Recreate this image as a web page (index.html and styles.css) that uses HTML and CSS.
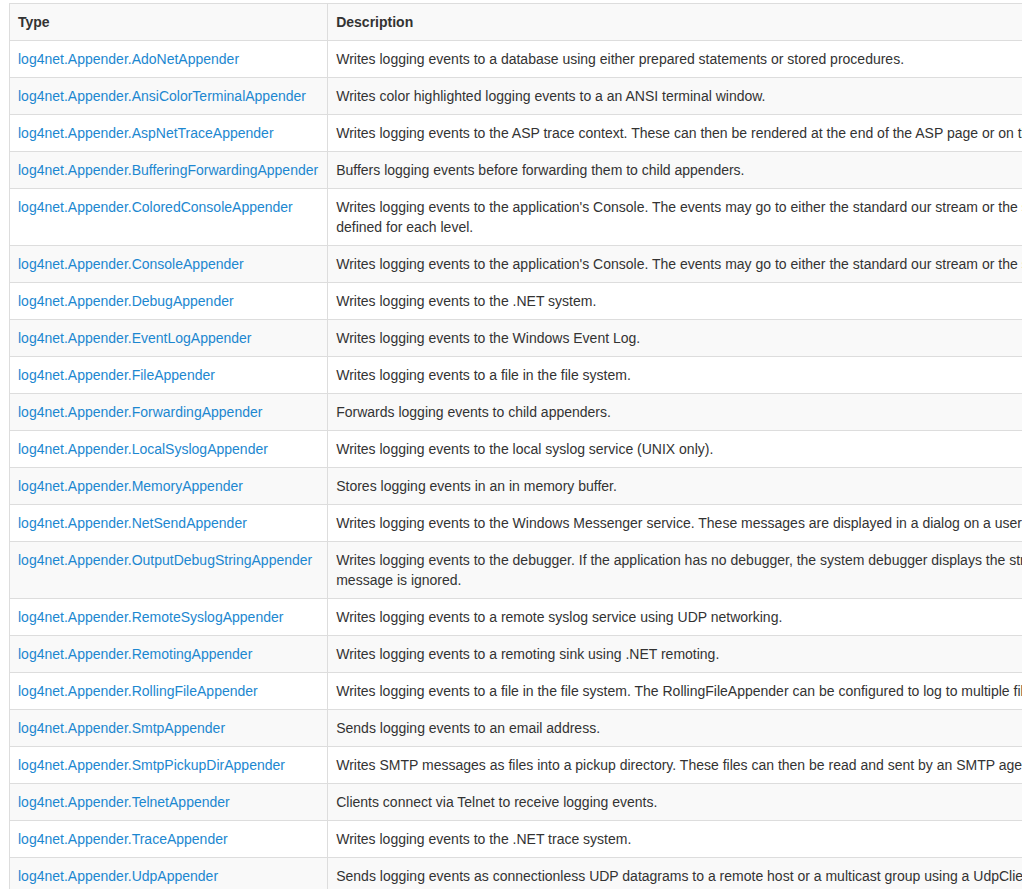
FILE: index.html
```html
<!DOCTYPE html>
<html lang="en">
<head>
<meta charset="UTF-8" />
<title>log4net Appenders</title>
<link rel="stylesheet" href="styles.css">
</head>
<body>

<div class="content">
  <table class="appenders">
    <tr>
      <th class="type">Type</th>
      <th class="desc">Description</th>
    </tr>
    <tr>
      <td class="type"><a href="#">log4net.Appender.AdoNetAppender</a></td>
      <td class="desc">Writes logging events to a database using either prepared statements or stored procedures.</td>
    </tr>
    <tr>
      <td class="type"><a href="#">log4net.Appender.AnsiColorTerminalAppender</a></td>
      <td class="desc">Writes color highlighted logging events to a an ANSI terminal window.</td>
    </tr>
    <tr>
      <td class="type"><a href="#">log4net.Appender.AspNetTraceAppender</a></td>
      <td class="desc">Writes logging events to the ASP trace context. These can then be rendered at the end of the ASP page or on the ASP trace page.</td>
    </tr>
    <tr>
      <td class="type"><a href="#">log4net.Appender.BufferingForwardingAppender</a></td>
      <td class="desc">Buffers logging events before forwarding them to child appenders.</td>
    </tr>
    <tr>
      <td class="type"><a href="#">log4net.Appender.ColoredConsoleAppender</a></td>
      <td class="desc">Writes logging events to the application's Console. The events may go to either the standard our stream or the standard error stream. The events may have configurable text and background colors defined for each level.</td>
    </tr>
    <tr>
      <td class="type"><a href="#">log4net.Appender.ConsoleAppender</a></td>
      <td class="desc">Writes logging events to the application's Console. The events may go to either the standard our stream or the standard error stream.</td>
    </tr>
    <tr>
      <td class="type"><a href="#">log4net.Appender.DebugAppender</a></td>
      <td class="desc">Writes logging events to the .NET system.</td>
    </tr>
    <tr>
      <td class="type"><a href="#">log4net.Appender.EventLogAppender</a></td>
      <td class="desc">Writes logging events to the Windows Event Log.</td>
    </tr>
    <tr>
      <td class="type"><a href="#">log4net.Appender.FileAppender</a></td>
      <td class="desc">Writes logging events to a file in the file system.</td>
    </tr>
    <tr>
      <td class="type"><a href="#">log4net.Appender.ForwardingAppender</a></td>
      <td class="desc">Forwards logging events to child appenders.</td>
    </tr>
    <tr>
      <td class="type"><a href="#">log4net.Appender.LocalSyslogAppender</a></td>
      <td class="desc">Writes logging events to the local syslog service (UNIX only).</td>
    </tr>
    <tr>
      <td class="type"><a href="#">log4net.Appender.MemoryAppender</a></td>
      <td class="desc">Stores logging events in an in memory buffer.</td>
    </tr>
    <tr>
      <td class="type"><a href="#">log4net.Appender.NetSendAppender</a></td>
      <td class="desc">Writes logging events to the Windows Messenger service. These messages are displayed in a dialog on a users terminal.</td>
    </tr>
    <tr>
      <td class="type"><a href="#">log4net.Appender.OutputDebugStringAppender</a></td>
      <td class="desc">Writes logging events to the debugger. If the application has no debugger, the system debugger displays the string. If the application has no debugger and the system debugger is not active, the message is ignored.</td>
    </tr>
    <tr>
      <td class="type"><a href="#">log4net.Appender.RemoteSyslogAppender</a></td>
      <td class="desc">Writes logging events to a remote syslog service using UDP networking.</td>
    </tr>
    <tr>
      <td class="type"><a href="#">log4net.Appender.RemotingAppender</a></td>
      <td class="desc">Writes logging events to a remoting sink using .NET remoting.</td>
    </tr>
    <tr>
      <td class="type"><a href="#">log4net.Appender.RollingFileAppender</a></td>
      <td class="desc">Writes logging events to a file in the file system. The RollingFileAppender can be configured to log to multiple files based upon date or file size constraints.</td>
    </tr>
    <tr>
      <td class="type"><a href="#">log4net.Appender.SmtpAppender</a></td>
      <td class="desc">Sends logging events to an email address.</td>
    </tr>
    <tr>
      <td class="type"><a href="#">log4net.Appender.SmtpPickupDirAppender</a></td>
      <td class="desc">Writes SMTP messages as files into a pickup directory. These files can then be read and sent by an SMTP agent such as the IIS SMTP agent.</td>
    </tr>
    <tr>
      <td class="type"><a href="#">log4net.Appender.TelnetAppender</a></td>
      <td class="desc">Clients connect via Telnet to receive logging events.</td>
    </tr>
    <tr>
      <td class="type"><a href="#">log4net.Appender.TraceAppender</a></td>
      <td class="desc">Writes logging events to the .NET trace system.</td>
    </tr>
    <tr>
      <td class="type"><a href="#">log4net.Appender.UdpAppender</a></td>
      <td class="desc">Sends logging events as connectionless UDP datagrams to a remote host or a multicast group using a UdpClient.</td>
    </tr>
  </table>
</div>

</body>
</html>
```

FILE: styles.css
```css
* {
  box-sizing: border-box;
}
body {
  margin: 0;
  font-family: 'Liberation Sans', Arial, Helvetica, sans-serif;
  font-size: 14px;
  line-height: 20px;
  color: #333;
  background: #fff;
  overflow: hidden;
}
.content {
  padding: 3px 0 0 9px;
}
.appenders {
  width: max-content;
  border-collapse: collapse;
  border: 1px solid #ddd;
}
.appenders th,
.appenders td {
  padding: 8px;
  border: 1px solid #ddd;
  text-align: left;
  vertical-align: top;
}
.appenders th {
  font-weight: 700;
}
.appenders tr:nth-child(odd) {
  background: #f9f9f9;
}
.appenders .type {
  white-space: nowrap;
  padding-right: 9px;
}
.appenders .desc {
  width: 1238px;
}
.appenders a {
  color: #1c87d0;
  text-decoration: none;
}
```
